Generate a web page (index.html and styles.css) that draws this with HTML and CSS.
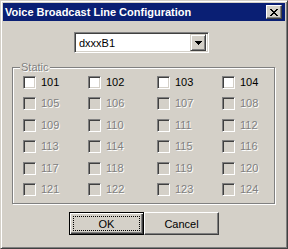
FILE: index.html
```html
<!DOCTYPE html>
<html lang="en">
<head>
    <meta charset="UTF-8">
    <title>Voice Broadcast Line Configuration</title>
    <link rel="stylesheet" href="styles.css">
</head>
<body>
    <div class="window">
        <div class="titlebar">
            <span class="title">Voice Broadcast Line Configuration</span>
            <button class="close-btn">
                <svg width="8" height="7" viewBox="0 0 8 7"><path fill="#000" d="M0 0h2v1H0zM6 0h2v1H6zM1 1h2v1H1zM5 1h2v1H5zM2 2h4v1H2zM3 3h2v1H3zM2 4h4v1H2zM1 5h2v1H1zM5 5h2v1H5zM0 6h2v1H0zM6 6h2v1H6z"/></svg>
            </button>
        </div>

        <div class="content">
            <div class="combo-row">
                <div class="combo">
                    <span class="combo-text">dxxxB1</span>
                    <span class="combo-drop">
                        <svg width="7" height="4" viewBox="0 0 7 4"><path fill="#000" d="M0 0h7v1H0zM1 1h5v1H1zM2 2h3v1H2zM3 3h1v1H3z"/></svg>
                    </span>
                </div>
            </div>

            <!-- Static lines -->
            <div class="group">
                <span class="group-label">Static</span>
                <div class="line-grid" id="lineGrid"></div>
            </div>

            <div class="buttons">
                <button class="btn default"><span class="focus">OK</span></button>
                <button class="btn">Cancel</button>
            </div>
        </div>
    </div>

    <script>
        // Build the 24 line checkboxes, only the first row is enabled
        const grid = document.getElementById('lineGrid');
        for (let i = 0; i < 24; i++) {
            const item = document.createElement('div');
            item.className = i < 4 ? 'check' : 'check disabled';
            const box = document.createElement('span');
            box.className = 'box';
            const text = document.createElement('span');
            text.className = 'check-text';
            text.textContent = 101 + i;
            item.appendChild(box);
            item.appendChild(text);
            grid.appendChild(item);
        }
    </script>
</body>
</html>
```

FILE: styles.css
```css
body {
    margin: 0;
    padding: 0;
    font-family: "Liberation Sans", Arial, sans-serif;
    font-size: 11px;
    background-color: #d4d0c8;
}
.window {
    box-sizing: border-box;
    width: 288px;
    height: 249px;
    background-color: #d4d0c8;
    border: 1px solid;
    border-color: #d4d0c8 #404040 #404040 #d4d0c8;
    box-shadow: inset 1px 1px #ffffff, inset -1px -1px #808080;
    padding: 2px;
    display: flex;
    flex-direction: column;
}
.titlebar {
    height: 18px;
    background-color: #0a1f74;
    display: flex;
    align-items: center;
    justify-content: space-between;
    padding: 0 3px 0 2px;
}
.title {
    color: white;
    font-weight: bold;
    font-size: 11px;
}
.close-btn {
    width: 16px;
    height: 14px;
    padding: 0;
    background-color: #d4d0c8;
    border: 1px solid;
    border-color: #ffffff #404040 #404040 #ffffff;
    box-shadow: inset -1px -1px #808080;
    display: flex;
    align-items: center;
    justify-content: center;
}
.content {
    flex: 1;
    padding: 11px 10px 0 9px;
}
.combo-row {
    display: flex;
    padding-left: 62px;
}
.combo {
    box-sizing: border-box;
    width: 135px;
    height: 21px;
    background-color: white;
    border: 1px solid;
    border-color: #808080 #ffffff #ffffff #808080;
    box-shadow: inset 1px 1px #404040, inset -1px -1px #d4d0c8;
    display: flex;
    align-items: center;
    padding: 2px;
}
.combo-text {
    flex: 1;
    padding-left: 2px;
}
.combo-drop {
    box-sizing: border-box;
    width: 16px;
    height: 17px;
    background-color: #d4d0c8;
    border: 1px solid;
    border-color: #d4d0c8 #404040 #404040 #d4d0c8;
    box-shadow: inset 1px 1px #ffffff, inset -1px -1px #808080;
    display: flex;
    align-items: center;
    justify-content: center;
}
/* Group box */
.group {
    position: relative;
    margin-top: 14px;
    height: 135px;
    border: 1px solid #808080;
    box-shadow: inset 1px 1px #ffffff, 1px 1px #ffffff;
}
.group-label {
    position: absolute;
    top: -7px;
    left: 7px;
    padding: 0 1px;
    background-color: #d4d0c8;
    color: #808080;
    text-shadow: 1px 1px #ffffff;
}
.line-grid {
    display: grid;
    grid-template-columns: 65px 69px 65px auto;
    grid-auto-rows: 21.4px;
    padding: 8px 0 0 10px;
}
.check {
    display: flex;
    align-items: flex-start;
    gap: 5px;
}
.box {
    box-sizing: border-box;
    width: 13px;
    height: 13px;
    background-color: white;
    border: 1px solid;
    border-color: #808080 #ffffff #ffffff #808080;
    box-shadow: inset 1px 1px #404040, inset -1px -1px #d4d0c8;
}
.check-text {
    line-height: 13px;
}
.disabled .box {
    background-color: #d4d0c8;
}
.disabled .check-text {
    color: #808080;
    text-shadow: 1px 1px #ffffff;
}
.buttons {
    display: flex;
    padding: 8px 0 0 57px;
}
.btn {
    box-sizing: border-box;
    width: 75px;
    height: 23px;
    padding: 0;
    font-family: "Liberation Sans", Arial, sans-serif;
    font-size: 11px;
    color: black;
    background-color: #d4d0c8;
    border: 1px solid;
    border-color: #ffffff #404040 #404040 #ffffff;
    box-shadow: inset -1px -1px #808080;
}
.btn.default {
    border: 1px solid #000000;
    box-shadow: inset 1px 1px #ffffff, inset -1px -1px #404040, inset -2px -2px #808080;
    padding: 3px;
}
.focus {
    box-sizing: border-box;
    display: flex;
    align-items: center;
    justify-content: center;
    width: 100%;
    height: 100%;
    border: 1px dotted #000000;
}
```
